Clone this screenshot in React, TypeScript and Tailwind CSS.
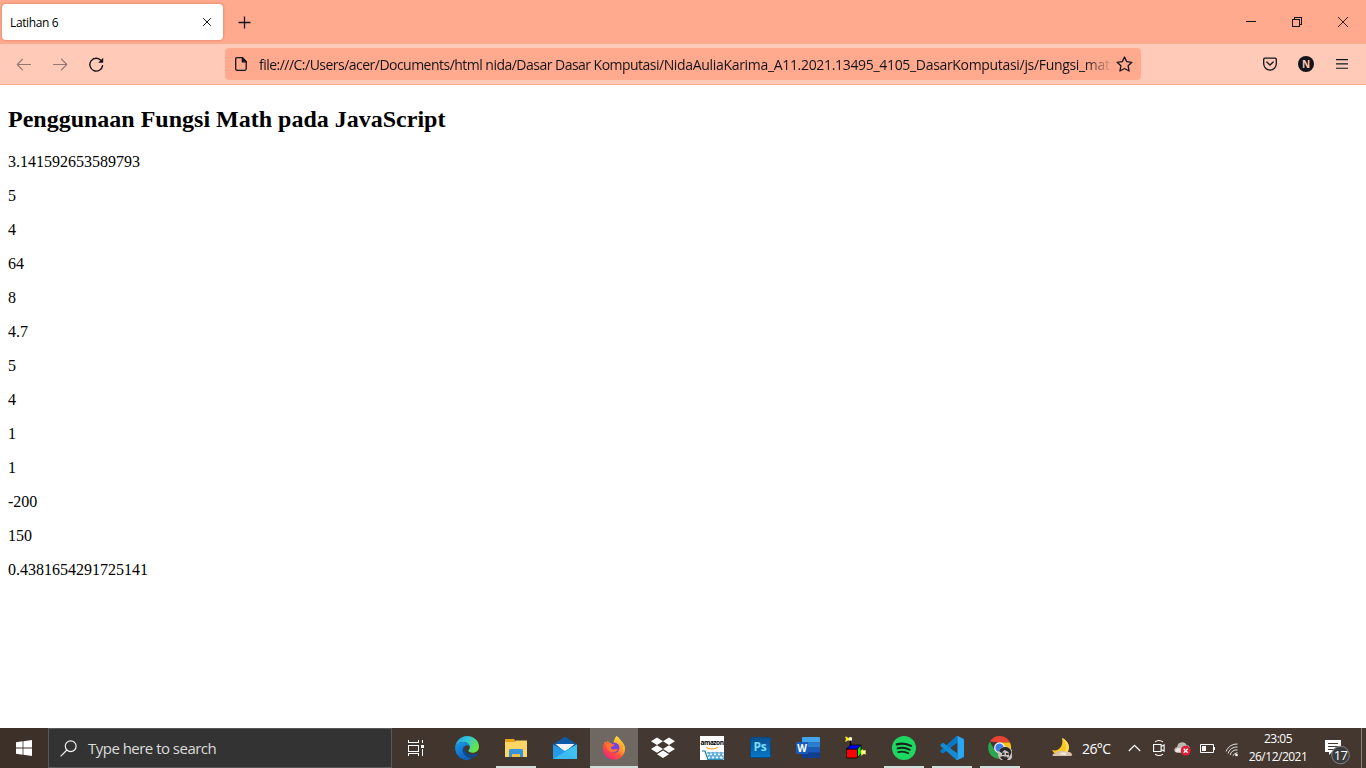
import type { ReactNode } from "react";

const results = [
  "3.141592653589793", "5", "4", "64", "8", "4.7", "5", "4", "1", "1", "-200", "150", "0.4381654291725141",
];

function TabStrip() {
  return (
    <div className="flex h-11 shrink-0 items-start bg-[#ffaa8f] pt-1 pl-0.5">
      <div className="flex h-9 w-[221px] items-center justify-between rounded bg-white pr-[11px] pl-2 shadow-[0_0_3px_rgba(120,50,30,0.4)]">
        <span className="pt-[2px] text-[12px] leading-none tracking-[-0.37px] text-black">Latihan 6</span>
        <svg width="10" height="10" viewBox="0 0 10 10" fill="none" stroke="#15141a" strokeWidth="1">
          <path d="M1.2 1.2l7.6 7.6M8.8 1.2L1.2 8.8" />
        </svg>
      </div>
      <svg className="mt-[12px] ml-[15px]" width="13" height="13" viewBox="0 0 13 13" fill="none" stroke="#15141a" strokeWidth="1.3">
        <path d="M6.5 .5v12M.5 6.5h12" />
      </svg>
      <div className="mt-[12px] mr-[18px] ml-auto flex gap-9">
        <svg width="10" height="12" viewBox="0 0 10 12" stroke="#15141a"><path d="M0 5.5h10" /></svg>
        <svg width="10" height="12" viewBox="0 0 10 12" fill="none" stroke="#15141a" shapeRendering="crispEdges">
          <path d="M.5 3.5h7v7h-7zM2.5 3.5v-2h7v7h-2" />
        </svg>
        <svg width="10" height="12" viewBox="0 0 10 12" stroke="#15141a" strokeWidth=".9"><path d="M0 1l10 10M10 1L0 11" /></svg>
      </div>
    </div>
  );
}

function Toolbar() {
  return (
    <div className="flex h-[41px] shrink-0 items-start border-b border-[#ffaa8f] bg-[#ffcab8] pt-1">
      <div className="ml-4 flex h-8 w-[209px] items-center gap-5 text-[#15141a]">
        <svg width="16" height="16" viewBox="0 0 16 16" fill="none" stroke="currentColor" strokeWidth="1.2" opacity=".45" strokeLinecap="round" strokeLinejoin="round">
          <path d="M14.5 8.5h-13M6.5 3.2L1.3 8.5l5.2 5.3" />
        </svg>
        <svg width="16" height="16" viewBox="0 0 16 16" fill="none" stroke="currentColor" strokeWidth="1.2" opacity=".45" strokeLinecap="round" strokeLinejoin="round">
          <path d="M1.5 8.5h13M9.5 3.2l5.2 5.3-5.2 5.3" />
        </svg>
        <svg width="16" height="16" viewBox="0 0 16 16" fill="none" stroke="currentColor" strokeWidth="1.4" strokeLinecap="round">
          <path d="M13.2 4.6A6.4 6.4 0 1 0 14.6 9.6" />
          <path d="M15.2 1.8v5H10.2z" fill="currentColor" stroke="none" />
        </svg>
      </div>
      <div className="flex h-8 w-[916px] items-center rounded bg-[#ffaa8f] pl-[10px] text-[#15141a]">
        <svg width="12" height="14" viewBox="0 0 12 14" fill="none" stroke="currentColor" strokeWidth="1.3" strokeLinejoin="round">
          <path d="M2 .7h5.4l3.8 3.9v7.2q0 1.5-1.5 1.5H2q-1.3 0-1.3-1.5V2Q.7.7 2 .7z" />
          <path d="M7.3.8v4h4z" fill="currentColor" />
        </svg>
        <div className="ml-3 w-[852px] overflow-hidden pt-[2px] text-[14px] leading-[22px] whitespace-nowrap [mask-image:linear-gradient(to_right,#000_826px,transparent_854px)]">
          <span className="tracking-[-0.52px]">file:///C:/Users/acer/Documents/html nida/Dasar Dasar Komputasi/</span>
          <span className="tracking-[-0.32px]">NidaAuliaKarima_A11.2021.13495_4105_DasarKomputasi/js/Fungsi_math</span>
        </div>
        <svg className="ml-[5px] shrink-0" width="17" height="16" viewBox="0 0 17 16" fill="none" stroke="currentColor" strokeWidth="1.3" strokeLinejoin="round">
          <path d="M8.5 1l2.2 4.6 5.2.7-3.8 3.5 1 5.2-4.6-2.5L3.9 15l1-5.2L1.1 6.3l5.2-.7z" />
        </svg>
      </div>
      <div className="mr-[18px] ml-auto flex h-8 items-center text-[#15141a]">
        <svg width="14" height="14" viewBox="0 0 14 14" fill="none" stroke="currentColor" strokeWidth="1.3" strokeLinecap="round" strokeLinejoin="round">
          <path d="M1.8 1.2h10.4q1.1 0 1.1 1.1V6.8a6.3 6.3 0 0 1-12.6 0V2.3q0-1.1 1.1-1.1zM3.8 5L7 8l3.2-3" />
        </svg>
        <div className="ml-[21px] flex size-4 items-center justify-center rounded-full bg-[#15141a] text-[10px] font-bold text-[#ffcab8]">N</div>
        <svg className="ml-[22px]" width="12" height="12" viewBox="0 0 12 12" stroke="currentColor" strokeWidth="1.1"><path d="M0 1.6h12M0 5.9h12M0 10.2h12" /></svg>
      </div>
    </div>
  );
}

function Page() {
  return (
    <main className="flex-1 overflow-hidden bg-white px-2 pt-5 font-['Liberation_Serif',serif] text-black">
      <h2 className="mb-[19.9px] text-[24px] leading-7 font-bold">Penggunaan Fungsi Math pada JavaScript</h2>
      {results.map((value, i) => (
        <p key={i} className="mb-4 text-[16px] leading-[18px]">{value}</p>
      ))}
    </main>
  );
}

function App24({ children }: { children: ReactNode }) {
  return <svg width="24" height="24" viewBox="0 0 24 24">{children}</svg>;
}

const edge = (
  <App24>
    <defs>
      <linearGradient id="eg" x1="0" y1="0" x2="1" y2=".5"><stop stopColor="#269fe0" /><stop offset=".5" stopColor="#31c5d8" /><stop offset="1" stopColor="#66e646" /></linearGradient>
      <linearGradient id="eb" x1="0" y1="0" x2=".5" y2="1"><stop stopColor="#1b9ae2" /><stop offset="1" stopColor="#0a62c2" /></linearGradient>
    </defs>
    <path d="M.2 11.5A12 12 0 0 1 12 0c7 0 12 5 12 10.7 0 3.8-3 6-6.2 6-2.700 0-4.500-1-4.500-1.900 0-.9 1.500-1.300 1.500-3.600C14.800 8 11.500 6 8 6 4 6 1 8.400.2 11.500z" fill="url(#eg)" />
    <path d="M.1 12C.4 8 4 6 8 6c4 0 6.700 2.300 6.800 5.100-1-1.400-2.500-2-4.100-1.300C7.500 11 7.100 15 9 18c1.800 3 4.800 4 7.500 3.900-1.300 1.300-3 2-4.500 2A12 12 0 0 1 .1 12z" fill="url(#eb)" />
    <path d="M9.800 10.200C7 12 7 15.600 9 18c3 3.800 8.500 4.600 12.200 2 .8-.6 1.700-1.700 1.500-2.400-.2-.6-1.200.2-2.200.5-5.500 1.700-10.300-1-11-4.500-.3-1.300-.2-2.500.3-3.400z" fill="#0c4a96" />
  </App24>
);

const explorer = (
  <App24>
    <path d="M1 3h9l1.500 2H22q1 0 1 1v15H1z" fill="#e8a317" />
    <path d="M1 6h10l1-1.500h11V21H1z" fill="#ffd666" />
    <path d="M5 21v-6.500q0-1.500 1.500-1.500h11q1.500 0 1.500 1.500V21h-3v-3H8v3z" fill="#3594dc" />
    <path d="M8 21h8v-3H8z" fill="#f5bd45" />
  </App24>
);

const mail = (
  <App24>
    <path d="M0 8.500L11.500 1.100q.5-.3 1 0L24 8.500v4L12 16 0 12z" fill="#0b5ba8" />
    <path d="M2.500 8h19L12 16z" fill="#f1f3f6" />
    <path d="M0 8.500l12 6.500 12-6.500V23H0z" fill="#249be6" />
    <path d="M24 8.500V23L12 15z" fill="#2aaeea" />
    <path d="M0 23L24 8.500V23z" fill="#46c5f3" opacity=".75" />
  </App24>
);

const firefox = (
  <App24>
    <defs>
      <linearGradient id="ff" x1=".9" y1="0" x2=".2" y2="1"><stop stopColor="#fff44f" /><stop offset=".35" stopColor="#ffb52b" /><stop offset=".65" stopColor="#ff5139" /><stop offset="1" stopColor="#e7208a" /></linearGradient>
      <linearGradient id="fy" x1="0" y1="0" x2="0" y2="1"><stop stopColor="#ffd83d" /><stop offset="1" stopColor="#ff8a1e" /></linearGradient>
    </defs>
    <path d="M14.500 0c3 1.500 3.500 3.800 5 5.200 2 1.800 3.500 4.500 3.500 7.500A11 11 0 0 1 1 13c0-3.500 1-6.200 2.300-8 .2 1 .5 1.500.9 2L6 4.500c.2 1.500 1 2.300 2.500 2.500h3c.2-3 1.500-5 3-7z" fill="url(#ff)" />
    <circle cx="12.300" cy="11.600" r="5.200" fill="#7542e5" />
    <path d="M3.500 7.500c3-2 5-1 6 .5l3 .5c-.2 1.500-2 2-3.300 2.400-.6 1 0 2.500 1.800 2.700 2 .2 2.800-1 4.800-.4-1 2.800-5 4-7.800 2.200-3.500-2-3.500-5-4.500-7.900z" fill="#ff722f" />
    <path d="M14.500 0c-2 3-1 5.500.8 6.800 3 2.200 3.500 5.700 1.500 9 3-1 4.800-3.500 4.800-6.300C21.600 6 16.500 5 14.500 0z" fill="url(#fy)" />
  </App24>
);

const dropbox = (
  <App24>
    <path fill="#fff" d="M6 1.500l6 3.800-6 3.800-6-3.800zM18 1.500l6 3.800-6 3.800-6-3.800zM6 9.200L12 13l-6 3.800L0 13zM18 9.200l6 3.800-6 3.800-6-3.800zM12 14.400l6 3.800-6 3.800-6-3.800z" />
  </App24>
);

const amazon = (
  <div className="flex size-6 flex-col items-center overflow-hidden bg-white">
    <span className="mt-[3px] text-[6.5px] leading-[8px] font-bold tracking-[-0.45px] text-black">amazon</span>
    <svg width="24" height="13" viewBox="0 0 24 13" fill="none">
      <path d="M6 .5q6 3 12-.2" stroke="#f2a11c" strokeWidth="1" />
      <path d="M2 4h3l3 8.500h15" stroke="#1577a8" strokeWidth="1.200" />
      <path d="M7 6h17M8 9h16M9 12h15M8 5l4 7M12 5l4 7M16 5l4 7M20 5l4 7M10 5l-2 5M14 5l-4 7M18 5l-4 7M22 5l-4 7" stroke="#4ba7d4" strokeWidth="1.100" />
    </svg>
  </div>
);

const photoshop = (
  <div className="mb-[2px] flex size-[21px] items-center justify-center rounded-[1px] border border-[#064a83] bg-linear-to-b from-[#0a4f91] to-[#0877c8] text-[12px] leading-none font-bold tracking-[-0.3px] text-[#7bddff]">Ps</div>
);

const word = (
  <div className="relative mb-[2px] h-[21px] w-6">
    <svg width="24" height="21" viewBox="0 0 24 21">
      <path d="M7 0h16q1 0 1 1v4.500H6V1q0-1 1-1z" fill="#41a5ee" /><path d="M6 5.300h18v5.200H6z" fill="#2b7cd3" /><path d="M6 10.500h18v5.200H6z" fill="#185abd" /><path d="M6 15.500h18V20q0 1-1 1H7q-1 0-1-1z" fill="#103f91" />
    </svg>
    <span className="absolute top-[5px] left-0 flex size-3 items-center justify-center rounded-[1px] bg-[#185abd] text-[10px] leading-none font-bold text-white">W</span>
  </div>
);

const cube = (
  <App24>
    <g stroke="#000" strokeWidth=".8">
      <path d="M2.500 13h11v9h-11z" fill="#f00" /><path d="M2.500 13l4-4H17l-3.500 4z" fill="#00f" /><path d="M13.500 13L17 9v8.500L13.500 22z" fill="#0f0" />
      <path d="M6.500 10V4.500" strokeWidth="1.200" />
    </g>
    <path d="M1 .8h2l1 1.200L7 1l1 3-4 .500-3 1.500 1-3z" fill="#ffeb19" /><path d="M5 1.500h3v3H5z" fill="#fff" />
    <path d="M16.500 15l2-2 1 2 2.500-1-1 2.500 1.500 2-3-.5-2 2-.5-2.500z" fill="#ffeb19" /><path d="M18.500 14.500h3v3h-3z" fill="#fffbd0" />
  </App24>
);

const spotify = (
  <App24>
    <circle cx="12" cy="12" r="12" fill="#1ed760" />
    <g fill="none" stroke="#15241a" strokeLinecap="round"><path d="M4.800 8.400c4.600-1.400 10-.9 14.200 1.500" strokeWidth="2.200" /><path d="M5.500 12.400c4.200-1.200 8.500-.7 12.300 1.400" strokeWidth="1.900" /><path d="M6.100 16.100c3.600-.9 7.100-.6 10.300 1.200" strokeWidth="1.600" /></g>
  </App24>
);

const vscode = (
  <App24>
    <path d="M17.500 0v6.600L3.400 17.300q-.6.400-1.100 0L.5 15.700q-.7-.6 0-1.200L16 .5q.7-.7 1.500-.5z" fill="#0879c5" />
    <path d="M.5 8.700l1.700-1.600q.6-.4 1.200 0L17.500 17.600V24q-.9 0-1.500-.6L.5 9.900q-.6-.6 0-1.200z" fill="#168bd4" />
    <path d="M17.500 0L23 2.600q1 .5 1 1.500v15.800q0 1-1 1.500L17.500 24q-.8 0-1.500-.6 1.500.5 1.500-.9v-21Q17.500.2 16 .6q.6-.6 1.500-.6z" fill="#2aa7f2" />
  </App24>
);

const chrome = (
  <App24>
    <path d="M1.800 5.600A11.500 11.500 0 0 1 22 6.500H12z" fill="#e84335" />
    <path d="M1.800 5.600L7 14.800 12 17l-1.500 6A11.500 11.500 0 0 1 1.800 5.600z" fill="#2da44e" />
    <path d="M12 6.500h10A11.500 11.500 0 0 1 11 23l5.500-9z" fill="#fbc116" />
    <circle cx="11.500" cy="11.700" r="5.400" fill="#fff" /><circle cx="11.500" cy="11.700" r="4.200" fill="#3b7ded" />
    <circle cx="17.500" cy="18" r="7.500" fill="#c9c4c0" />
    <path d="M11 15q2-4 6-4 5 0 6.500 5l-2 5-1-5-4-2-3 3zM12 21l3-1 3 2 3-1-2 3q-4 1.500-7-3z" fill="#2c2625" />
    <path d="M14 16.500h2.500V19H14zM18 17h2.500v2H18zM15.500 20.500h3.500V22h-3.500z" fill="#463b38" />
  </App24>
);

const apps: { name: string; icon: ReactNode; open?: boolean; active?: boolean }[] = [
  { name: "edge", icon: edge },
  { name: "explorer", icon: explorer, open: true },
  { name: "mail", icon: mail },
  { name: "firefox", icon: firefox, active: true },
  { name: "dropbox", icon: dropbox },
  { name: "amazon", icon: amazon },
  { name: "photoshop", icon: photoshop },
  { name: "word", icon: word },
  { name: "cube", icon: cube },
  { name: "spotify", icon: spotify, open: true },
  { name: "vscode", icon: vscode, open: true },
  { name: "chrome", icon: chrome, open: true },
];

function Tray() {
  return (
    <div className="flex h-10 flex-1 items-center pl-[26px] text-white">
      <svg width="24" height="20" viewBox="0 0 24 20">
        <path d="M12 0c9 4 9 15 1 17-5 1-9-1-11-5 6 2 12-3 10-12z" fill="#fdc91c" />
        <path d="M12 0c9 4 9 15 1 17 5-5 4-11-1-17z" fill="#ffdf5c" />
        <path d="M3 18q-2-2 3-3 1-3 5-2 3-1 5 1 4-1 6 2 1 2-3 2z" fill="#d8c2ab" /><path d="M9 16q3-3 8-1l-2 2z" fill="#f6e9dd" />
      </svg>
      <span className="ml-[8px] w-[30px] pt-[2px] text-[14px] leading-none tracking-[-0.6px] whitespace-nowrap">26<span className="font-['Noto_Sans',sans-serif]">°</span>C</span>
      <svg className="ml-[16px]" width="13" height="8" viewBox="0 0 13 8" fill="none" stroke="#fff" strokeWidth="1.200"><path d="M.8 7l5.700-5.700L12.200 7" /></svg>
      <svg className="ml-[12px]" width="12" height="18" viewBox="0 0 12 18" fill="none" stroke="#fff" strokeWidth="1.100"><path d="M.6 5.500h7.500v7H.6zM8.100 7.500l3-1.500v6l-3-1.500M2 2.900q4-2.800 8 0M2 15.100q4 2.800 8 0" /></svg>
      <svg className="ml-[9px]" width="17" height="15" viewBox="0 0 17 15">
        <path d="M3 11.500Q0 11 .3 8.500.6 6 3.200 6 3.500 1.500 8 1.200q3.500-.1 4.700 3 3.300.3 3.300 4 0 3-3 3.300z" fill="#bbb8b5" /><path d="M1 10q2-5 7-2l3 3.500H3z" fill="#ebe7e4" />
        <circle cx="11.700" cy="9.700" r="5" fill="#df1e35" /><path d="M9.700 7.700l4 4M13.700 7.700l-4 4" stroke="#fff" strokeWidth="1.300" />
      </svg>
      <svg className="ml-[9px]" width="15" height="9" viewBox="0 0 15 9" fill="none" stroke="#fff"><path d="M.5.5h13v8H.5z" /><path d="M2 2h4v5H2z" fill="#fff" stroke="none" /><path d="M14.500 3v3" /></svg>
      <svg className="mt-[3px] ml-[10px]" width="14" height="14" viewBox="0 0 14 14" fill="none" stroke="#fff" strokeWidth="1"><path d="M1 8.500A11.500 11.500 0 0 1 12.500 1M3 10.500A9 9 0 0 1 12.500 4M5.200 12A6.300 6.300 0 0 1 12.500 7M8 12.800Q9 10 12.500 9.700" opacity=".85" /><circle cx="11.500" cy="12" r="1.300" fill="#fff" stroke="none" /></svg>
      <div className="ml-[8px] flex h-10 w-[62px] flex-col items-center pt-[2px] text-[12px] leading-[18px] tracking-[-0.5px] whitespace-nowrap">
        <span>23:05</span><span>26/12/2021</span>
      </div>
      <div className="relative ml-4 h-6 w-[26px]">
        <svg className="overflow-visible" width="26" height="24" viewBox="0 0 26 24"><path d="M0 4h16v12H7l-3 3v-3H0z" fill="#fff" /><path d="M3 7.500h10M3 10.500h10M3 13.500h6" stroke="#44362e" /><circle cx="15.500" cy="19" r="8.800" fill="#393b3d" stroke="#858585" /></svg>
        <span className="absolute top-[11px] left-[7px] w-[17px] text-center text-[13px] leading-[16px] tracking-[-0.8px]">17</span>
      </div>
      <div className="ml-auto h-10 w-[5px] border-l border-[#8b827c]" />
    </div>
  );
}

function Taskbar() {
  return (
    <footer className="flex h-10 shrink-0 items-center bg-[#44362e] bg-linear-to-r from-[#3c3028] via-[#443932] to-[#44372f]">
      <div className="flex w-12 justify-center">
        <svg width="16" height="16" viewBox="0 0 16 16" fill="#fff"><path d="M0 2.200L6.600 1.300v6.300H0zM7.400 1.200L16 0v7.600H7.400zM0 8.400h6.600v6.300L0 13.800zM7.400 8.400H16V16l-8.600-1.200z" /></svg>
      </div>
      <div className="flex h-10 w-[344px] items-center border border-[#5b5957] bg-[#333333] pl-[11px]">
        <svg width="17" height="17" viewBox="0 0 17 17" fill="none" stroke="#f1f1f1" strokeWidth="1.200"><circle cx="10.700" cy="6.200" r="5.400" /><path d="M6.900 10L.6 16.300" /></svg>
        <span className="ml-[11px] text-[15px] leading-none tracking-[-0.52px] text-[#dcdcdc]">Type here to search</span>
      </div>
      <div className="flex w-[51px] pl-4">
        <svg width="16" height="16" viewBox="0 0 16 16" fill="none" stroke="#fff" shapeRendering="crispEdges"><path d="M.5 0v2.500h10V0M.5 16v-2.500h10V16M.5 5.500h10v6H.5zM14.500 0v3M14.500 9v7" /><path d="M13 4.500h3v3h-3z" fill="#fff" stroke="none" /></svg>
      </div>
      {apps.map((app, i) => (
        <div key={app.name} className={`${i < 5 ? "mr-px" : ""} ${app.active ? "bg-[#6f6761]" : ""} flex h-10 w-12 flex-col items-center`}>
          <div className="flex h-[38px] items-center pt-[2px]">{app.icon}</div>
          <div className={`${app.active ? "w-12 bg-[#cfe0da]" : app.open ? "w-10 bg-[#cfe0da]" : "w-0"} h-[2px]`} />
        </div>
      ))}
      <Tray />
    </footer>
  );
}

export default function App() {
  return (
    <div className="flex h-screen w-full flex-col overflow-hidden bg-white font-['Open_Sans','Noto_Sans',sans-serif]">
      <TabStrip />
      <Toolbar />
      <Page />
      <Taskbar />
    </div>
  );
}
